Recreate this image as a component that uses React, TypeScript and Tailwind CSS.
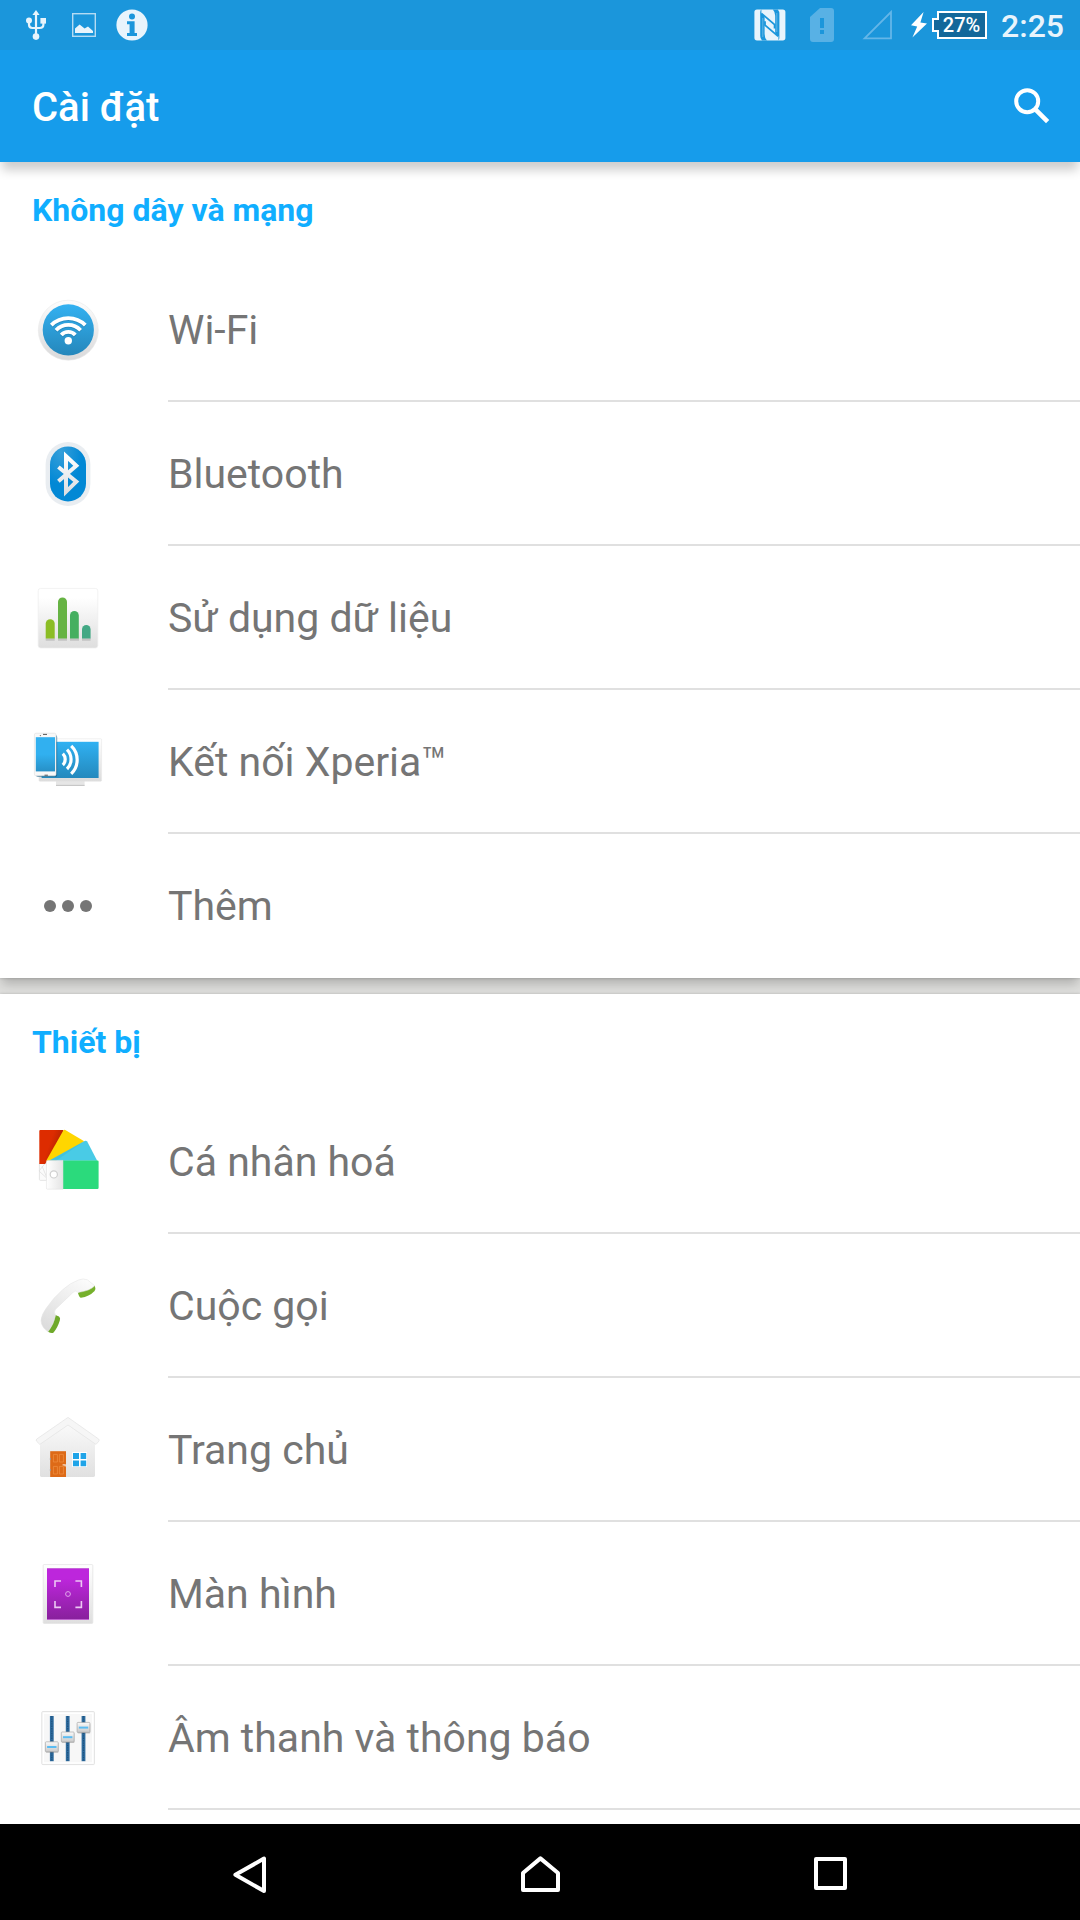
import type { ReactNode } from "react";

function IconBox({ children }: { children: ReactNode }) {
  return (
    <svg viewBox="0 0 72 72" className="size-18 shrink-0" fill="none" aria-hidden="true">
      {children}
    </svg>
  );
}

function WifiIcon() {
  return (
    <IconBox>
      <defs>
        <linearGradient id="wifi-rim" x1="0" y1="0" x2="0" y2="1">
          <stop offset="0" stopColor="#fdfdfd" />
          <stop offset="1" stopColor="#d9d9da" />
        </linearGradient>
        <linearGradient id="wifi-face" x1="0" y1="0" x2="0" y2="1">
          <stop offset="0" stopColor="#33b1f1" />
          <stop offset="1" stopColor="#2587bb" />
        </linearGradient>
      </defs>
      <circle cx="36.3" cy="37.2" r="30" fill="url(#wifi-rim)" stroke="#e9e9e9" strokeWidth=".6" />
      <circle cx="36.3" cy="36.9" r="25.6" fill="url(#wifi-face)" />
      <g stroke="#1f79ab" strokeOpacity=".5" strokeWidth="3.8" transform="translate(0 1)">
        <path d="M19.3 32.2A24 24 0 0 1 53.3 32.2M24 37.2A16.9 16.9 0 0 1 48.6 37.2M29.3 42A9.4 9.4 0 0 1 43.3 42" />
      </g>
      <g stroke="#fff" strokeWidth="3.8">
        <path d="M19.3 32.2A24 24 0 0 1 53.3 32.2M24 37.2A16.9 16.9 0 0 1 48.6 37.2M29.3 42A9.4 9.4 0 0 1 43.3 42" />
      </g>
      <circle cx="36.3" cy="47.7" r="3.7" fill="#fff" />
    </IconBox>
  );
}

function BluetoothIcon() {
  return (
    <IconBox>
      <defs>
        <radialGradient id="bt-face" cx=".3" cy=".1" r=".6">
          <stop offset="0" stopColor="#359fda" />
          <stop offset="1" stopColor="#0288d5" />
        </radialGradient>
        <linearGradient id="bt-rune" x1="0" y1="0" x2="0" y2="1">
          <stop offset="0" stopColor="#fff" />
          <stop offset="1" stopColor="#dcdfe2" />
        </linearGradient>
      </defs>
      <rect x="13.6" y="5" width="44.8" height="64" rx="22.4" fill="#e9edf1" />
      <rect x="18" y="9.4" width="36" height="55" rx="18" fill="url(#bt-face)" />
      <path
        d="M26.4 30L44.3 44.6L34 54.8V19.2L44.3 28.8L26.4 44.2"
        stroke="url(#bt-rune)"
        strokeWidth="4"
      />
    </IconBox>
  );
}

function DataIcon() {
  return (
    <IconBox>
      <defs>
        <linearGradient id="data-bg" x1="0" y1="0" x2="0" y2="1">
          <stop offset=".15" stopColor="#fff" />
          <stop offset="1" stopColor="#dedede" />
        </linearGradient>
      </defs>
      <rect x="6.2" y="7.4" width="59.6" height="59.6" rx="2.4" fill="url(#data-bg)" stroke="#eee" strokeWidth=".7" />
      <path d="M13.7 58.5h9M26 58.5h9M38 58.5h9M50 58.5h8.6" stroke="#aaa" strokeOpacity=".55" strokeWidth="2.6" />
      <path d="M13.7 57.5V42.7a4.5 4.5 0 0 1 9 0V57.5z" fill="#8bbd24" />
      <path d="M26 57.5V21a4.5 4.5 0 0 1 9 0V57.5z" fill="#66b343" />
      <path d="M38 57.5V34.4a4.4 4.4 0 0 1 8.8 0V57.5z" fill="#45af60" />
      <path d="M50 57.5V48.4a4.3 4.3 0 0 1 8.6 0V57.5z" fill="#42a884" />
    </IconBox>
  );
}

function XperiaIcon() {
  return (
    <IconBox>
      <defs>
        <linearGradient id="xp-screen" x1="0" y1="0" x2="0" y2="1">
          <stop offset="0" stopColor="#30b1f2" />
          <stop offset="1" stopColor="#2489bd" />
        </linearGradient>
        <linearGradient id="xp-phone" x1="0" y1="0" x2="0" y2="1">
          <stop offset=".5" stopColor="#31b0f0" />
          <stop offset="1" stopColor="#2790c6" />
        </linearGradient>
        <linearGradient id="xp-frame" x1="0" y1="0" x2="0" y2="1">
          <stop offset="0" stopColor="#fff" />
          <stop offset="1" stopColor="#dcdcdc" />
        </linearGradient>
      </defs>
      <rect x="24" y="56" width="28.6" height="4.8" fill="#e6e6e6" />
      <path d="M24 60.4h28.6" stroke="#bdbdbd" strokeWidth=".9" />
      <rect x="7" y="13.8" width="62.6" height="42.4" rx=".8" fill="url(#xp-frame)" stroke="#e6e6e6" strokeWidth=".6" />
      <rect x="9.6" y="16.8" width="57" height="36.2" fill="url(#xp-screen)" />
      <rect x="4" y="10" width="21.2" height="42" rx="2" fill="#145b84" fillOpacity=".6" />
      <rect x="2.4" y="8.2" width="21.6" height="42.6" rx="1.6" fill="#f8f8f8" stroke="#dedede" strokeWidth=".6" />
      <rect x="3.8" y="12.2" width="19.2" height="34.2" fill="url(#xp-phone)" />
      <path d="M11 9.4h4M12.5 50.2h3.4" stroke="#555" strokeWidth="1" />
      <circle cx="8.4" cy="10.6" r=".7" fill="#777" />
      <g stroke="#fff" strokeWidth="3.2">
        <path d="M30.8 28.6a8 8 0 0 1 0 11.4" />
        <path d="M35 24.6a13.6 13.6 0 0 1 0 19.4" />
        <path d="M39.2 20.8a19.4 19.4 0 0 1 0 28" />
      </g>
    </IconBox>
  );
}

function MoreIcon() {
  return (
    <IconBox>
      <g fill="#757575">
        <circle cx="18" cy="37" r="6" />
        <circle cx="36" cy="37" r="6" />
        <circle cx="54" cy="37" r="6" />
      </g>
    </IconBox>
  );
}

function SwatchIcon() {
  return (
    <IconBox>
      <defs>
        <linearGradient id="sw-tag" x1="0" y1="0" x2="1" y2="0">
          <stop offset="0" stopColor="#fff" />
          <stop offset="1" stopColor="#e4e4e4" />
        </linearGradient>
        <linearGradient id="sw-red" x1="0" y1="0" x2="1" y2=".5">
          <stop offset=".5" stopColor="#dd2c00" />
          <stop offset="1" stopColor="#a82000" />
        </linearGradient>
      </defs>
      <path d="M7.4 38.4H14.6V55.4H8.4a1 1 0 0 1-1-1zM7 46L13 38.5M7 46l7.6 7M10 41l4.6 11" fill="#fbfbfb" stroke="#dedede" strokeWidth=".8" />
      <path d="M8.3 5H31.3V17L13 39H7.3V6a1 1 0 0 1 1-1z" fill="url(#sw-red)" />
      <path d="M31.3 5.4q.8-.9 2-.3L52.2 16.2 24 35.8H14.2z" fill="#ffd600" />
      <path d="M52.6 16q1.6-.8 2.6.6L65.2 35.8H17z" fill="#49cbe6" />
      <path d="M17 35.8L52.6 16 24 35.8z" fill="#2fa9c8" fillOpacity=".25" />
      <path d="M31 35.4H65.4a1.2 1.2 0 0 1 1.2 1.2V62.8a1.2 1.2 0 0 1-1.2 1.2H31z" fill="#2bda7c" />
      <path d="M31 35.4H15.6a1.2 1.2 0 0 0-1.2 1.2V63a1.2 1.2 0 0 0 1.2 1.2H31z" fill="url(#sw-tag)" stroke="#dcdcdc" strokeWidth=".5" />
      <circle cx="21.8" cy="49.4" r="3.6" fill="#fff" stroke="#cfcfcf" strokeWidth="1.2" />
    </IconBox>
  );
}

function CallIcon() {
  return (
    <IconBox>
      <defs>
        <linearGradient id="call-body" x1=".8" y1="0" x2=".2" y2="1">
          <stop offset="0" stopColor="#fbfbfb" />
          <stop offset="1" stopColor="#dcdcdc" />
        </linearGradient>
      </defs>
      <path d="M62.8 16.8Q64 20 62.6 22 57 27.8 49 28.8 47.2 28.8 46 24L50 19z" fill="#75b02b" />
      <path d="M23.4 46L27 47.4Q28.8 48.6 27.8 51.6 25.4 59.4 21.6 63.4 20 65 16 62.8L17 54z" fill="#6fa92a" />
      <path
        d="M9 51.6Q9.4 45.6 14.4 39 21.4 28.6 30.8 20.6 38.4 13.8 46.4 11 51.6 9 55.4 10.8L62.8 16.8Q58 21.8 46.2 23.4 43.6 20.8 41 23.4L23.6 40.2Q21.2 42.8 23.6 46.2 22 55.2 16 62.8 9.4 58.4 9 51.6z"
        fill="url(#call-body)"
        stroke="#e2e2e2"
        strokeWidth=".5"
      />
    </IconBox>
  );
}

function HomeAppIcon() {
  return (
    <IconBox>
      <defs>
        <linearGradient id="home-wall" x1="0" y1="0" x2="0" y2="1">
          <stop offset="0" stopColor="#fbfbfb" />
          <stop offset="1" stopColor="#e0e0e0" />
        </linearGradient>
      </defs>
      <path d="M8 27L36 9 63 27V62.6Q63 64 61.6 64H9.4Q8 64 8 62.6z" fill="url(#home-wall)" />
      <path d="M36 4.4L66.6 26q1 1 .4 2L64 31.4 36 12 7.8 31.4 4.4 28q-.6-1 .4-2z" fill="#f6f6f6" stroke="#e2e2e2" strokeWidth=".7" strokeLinejoin="round" />
      <rect x="18.2" y="38.2" width="15.8" height="25.8" fill="#dd6a17" />
      <path d="M21.4 41.4h4v7.6h-4zM27.4 41.4h4v7.6h-4zM21.4 53.4h4v7.6h-4zM27.4 53.4h4v7.6h-4z" stroke="#ef8c3e" strokeWidth=".8" />
      <path d="M30.6 51.8h2.6v1.6" stroke="#f6dcc6" strokeWidth="1.2" />
      <path d="M18.4 45v2M18.4 56v2" stroke="#9a9a9a" strokeWidth="1" />
      <rect x="40.2" y="39" width="14.8" height="15" fill="#fff" />
      <path d="M41 40h6v6h-6zM48.6 40h5.6v6h-5.6zM41 47.6h6v5.6h-6zM48.6 47.6h5.6v5.6h-5.6z" fill="#1fa4e8" />
    </IconBox>
  );
}

function DisplayIcon() {
  return (
    <IconBox>
      <defs>
        <linearGradient id="disp-frame" x1="0" y1="0" x2="0" y2="1">
          <stop offset="0" stopColor="#fff" />
          <stop offset="1" stopColor="#dfdfdf" />
        </linearGradient>
        <linearGradient id="disp-face" x1="0" y1="0" x2="0" y2="1">
          <stop offset=".2" stopColor="#bd26dc" />
          <stop offset="1" stopColor="#87209b" />
        </linearGradient>
      </defs>
      <rect x="11.2" y="7.6" width="49.6" height="58.8" rx="1" fill="url(#disp-frame)" stroke="#e3e3e3" strokeWidth=".8" />
      <rect x="15" y="11" width="42" height="52" fill="url(#disp-face)" />
      <path d="M15 11.5h42M15 62.5h42" stroke="#c76bd8" strokeWidth=".9" />
      <path d="M23 30V24h6M43.4 24h6v6M49.4 44v6.4h-6M29 50.4H23V44" stroke="#ecc8f3" strokeWidth="1.6" />
      <circle cx="36" cy="37" r="2.4" stroke="#dfa5ea" strokeWidth="1" />
    </IconBox>
  );
}

function SoundIcon() {
  const knobs = [
    { x: 19.8, y: 45.8 },
    { x: 35.7, y: 36 },
    { x: 51.5, y: 26.4 },
  ];
  return (
    <IconBox>
      <defs>
        <linearGradient id="knob" x1="0" y1="0" x2="0" y2="1">
          <stop offset="0" stopColor="#fafafa" />
          <stop offset="1" stopColor="#c9c9c9" />
        </linearGradient>
      </defs>
      <rect x="9.8" y="10.6" width="52.6" height="53" rx="1" fill="#f7f7f7" stroke="#e2e2e2" />
      <rect x="11.4" y="12.2" width="49.4" height="49.8" stroke="#fff" strokeWidth="1.4" />
      {knobs.map((k) => (
        <g key={k.x}>
          <path d={`M${k.x} 15V60.2`} stroke="#2f6c9e" strokeWidth="3.8" />
          <path d={`M${k.x} 15V60.2`} stroke="#1d517d" strokeWidth="1.2" strokeDasharray="1.4 1" />
          <rect x={k.x - 6} y={k.y - 4} width="12.8" height="10" rx="1" fill="#555" fillOpacity=".3" />
          <rect x={k.x - 6.4} y={k.y - 5} width="12.8" height="10" rx=".8" fill="url(#knob)" stroke="#a9a9a9" strokeWidth=".7" />
          <path d={`M${k.x - 4.7} ${k.y + 0.2}h9.4`} stroke="#5bbcf2" strokeWidth="2" />
        </g>
      ))}
    </IconBox>
  );
}

function StatusBar() {
  return (
    <div className="flex h-[50px] items-center justify-between bg-[#1b96db] pr-4 pl-[26px]">
      <div className="flex items-center">
        <svg viewBox="0 0 20 30" className="h-[30px] w-5" fill="none" aria-label="USB">
          <path d="M10 0L13.6 5H6.4z" fill="#e8f4fc" />
          <path d="M10 3V27M3 11V14.6Q3 18 6.4 18H13.6Q17.4 18 17.4 14.6V11" stroke="#e8f4fc" strokeWidth="2.2" />
          <circle cx="3" cy="10.4" r="3" fill="#e8f4fc" />
          <path d="M14.4 8H20v5.6h-5.6z" fill="#e8f4fc" />
          <circle cx="10" cy="26.6" r="3.3" fill="#e8f4fc" />
        </svg>
        <svg viewBox="0 0 24 24" className="ml-[26px] size-6" fill="none" aria-label="Screenshot">
          <rect x=".7" y=".7" width="22.6" height="22.6" stroke="#b4dbf3" strokeWidth="1.4" />
          <path d="M3 20V15.6L7.6 11.4 12.6 15.4 16 13.6 21 18V20z" fill="#e8f4fc" />
        </svg>
        <svg viewBox="0 0 32 32" className="ml-5 size-8" aria-label="Info">
          <circle cx="16" cy="16" r="15.6" fill="#e8f4fc" />
          <circle cx="16" cy="7.4" r="3" fill="#1b96db" />
          <path d="M11 12.2H18.6V24H21V27H11V24H13.6V15.2H11z" fill="#1b96db" />
        </svg>
      </div>
      <div className="flex items-center">
        <svg viewBox="0 0 32 32" className="size-8" fill="none" aria-label="NFC">
          <rect x=".4" y=".4" width="31" height="31" rx="2.6" fill="#e8f4fc" />
          <path d="M6.2 3.6Q6.2 1 7.4 .6V4.6L10.6 7.6V25Q10.6 29 13 31.4H8Q6.2 29.6 6.2 27z" fill="#1b96db" />
          <path d="M25.4 28.2Q25.4 30.8 24.4 31.2V27.2L21.2 24.2V6.8Q21.2 2.8 18.8 .4H23.8Q25.4 2.2 25.4 4.8z" fill="#1b96db" />
          <path d="M7.4 4.4L20.6 15.6V19.6M24.2 27.4L11 16.2V12.2" stroke="#1b96db" strokeWidth="1.8" />
          <path d="M22.8 4V23M8.8 9V28" stroke="#e8f4fc" strokeWidth=".7" strokeOpacity=".5" />
        </svg>
        <svg viewBox="0 0 24 34" className="ml-6 h-[34px] w-6" aria-label="SIM">
          <path d="M10 0H21Q24 0 24 3V31Q24 34 21 34H3Q0 34 0 31V9z" fill="#58b1e5" />
          <path d="M10 10h4v10h-4zM10 22h4v4h-4z" fill="#1b96db" />
        </svg>
        <svg viewBox="0 0 30 30" className="ml-7 size-[30px]" fill="none" aria-label="Signal">
          <path d="M2.6 28.4L29 2V28.4z" stroke="#64b6e8" strokeWidth="1.8" />
        </svg>
        <svg viewBox="0 0 16 26" className="ml-[19px] h-[26px] w-4" aria-label="Charging">
          <path d="M12.6 0L0 13.2 6.2 14.4 1.4 25.4 16 11.4 9.4 10.4z" fill="#fff" />
        </svg>
        <div className="relative ml-[5px] flex h-7 w-[55px] items-center justify-center pl-1">
          <svg viewBox="0 0 55 28" className="absolute inset-0 size-full" aria-hidden="true">
            <path d="M6 1H54V27H6V20H1V8H6z" fill="#13689a" stroke="#fff" strokeWidth="2" />
          </svg>
          <span className="relative text-[20px] leading-none font-medium text-white">27%</span>
        </div>
        <time className="ml-3.5 pt-0.5 text-[32px] leading-none font-medium text-[#e8f4fc]">2:25</time>
      </div>
    </div>
  );
}

type Item = { label: string; icon: ReactNode };

function Section({ title, items }: { title: string; items: Item[] }) {
  return (
    <section className="bg-white shadow-[0_8px_10px_-2px_rgba(0,0,0,0.2),0_0_3px_rgba(0,0,0,0.2)] last:flex-1">
      <h2 className="flex h-24 items-center px-8 text-[32px] leading-none font-bold text-[#10aeff]">{title}</h2>
      <ul className="group">
        {items.map((item) => (
          <li key={item.label} className="group/item">
            <button type="button" className="flex h-36 w-full items-stretch pl-8 text-left">
              <span className="flex w-34 items-center border-b-2 border-transparent">{item.icon}</span>
              <span className="flex flex-1 items-center border-b-2 border-[#e0e0e0] pt-0.5 text-[41px] leading-none text-[#757575] in-[section:not(:last-child)]:group-last/item:border-transparent">
                {item.label}
              </span>
            </button>
          </li>
        ))}
      </ul>
    </section>
  );
}

const wireless: Item[] = [
  { label: "Wi-Fi", icon: <WifiIcon /> },
  { label: "Bluetooth", icon: <BluetoothIcon /> },
  { label: "Sử dụng dữ liệu", icon: <DataIcon /> },
  { label: "Kết nối Xperia™", icon: <XperiaIcon /> },
  { label: "Thêm", icon: <MoreIcon /> },
];

const device: Item[] = [
  { label: "Cá nhân hoá", icon: <SwatchIcon /> },
  { label: "Cuộc gọi", icon: <CallIcon /> },
  { label: "Trang chủ", icon: <HomeAppIcon /> },
  { label: "Màn hình", icon: <DisplayIcon /> },
  { label: "Âm thanh và thông báo", icon: <SoundIcon /> },
];

export default function App() {
  return (
    <div className="flex h-screen flex-col bg-[#dededc] font-['Roboto',sans-serif]">
      <header className="relative z-10 shadow-[0_10px_10px_-2px_rgba(0,0,0,0.2)]">
        <StatusBar />
        <div className="flex h-28 items-center justify-between bg-[#169ceb] pr-6 pl-8">
          <h1 className="pt-1 text-[40px] leading-none font-medium text-white">Cài đặt</h1>
          <button type="button" aria-label="Tìm kiếm" className="flex size-12 items-center justify-center">
            <svg viewBox="0 0 36 36" className="size-9" fill="none" aria-hidden="true">
              <circle cx="13.2" cy="13.2" r="11" stroke="#fff" strokeWidth="4" />
              <path d="M21.6 21.6L33.6 33.6" stroke="#fff" strokeWidth="4.6" />
            </svg>
          </button>
        </div>
      </header>
      <main className="flex flex-1 flex-col gap-4 overflow-y-auto bg-[#dededc]">
        <Section title="Không dây và mạng" items={wireless} />
        <Section title="Thiết bị" items={device} />
      </main>
      <nav className="grid h-24 shrink-0 grid-cols-3 bg-black px-[105px] pt-1">
        <button type="button" aria-label="Quay lại" className="flex items-center justify-center">
          <svg viewBox="0 0 40 40" className="size-10" fill="none" stroke="#fff" strokeWidth="4" strokeLinejoin="round" aria-hidden="true">
            <path d="M34 4.6V37L5.4 20.8z" />
          </svg>
        </button>
        <button type="button" aria-label="Màn hình chính" className="flex items-center justify-center">
          <svg viewBox="0 0 40 40" className="size-10" fill="none" stroke="#fff" strokeWidth="4" strokeLinejoin="round" aria-hidden="true">
            <path d="M3 19L20.4 4.4 38 19V36H3z" />
          </svg>
        </button>
        <button type="button" aria-label="Gần đây" className="flex items-center justify-center">
          <svg viewBox="0 0 40 40" className="size-10" fill="none" stroke="#fff" strokeWidth="4" strokeLinejoin="round" aria-hidden="true">
            <path d="M6 5H35V34H6z" />
          </svg>
        </button>
      </nav>
    </div>
  );
}
